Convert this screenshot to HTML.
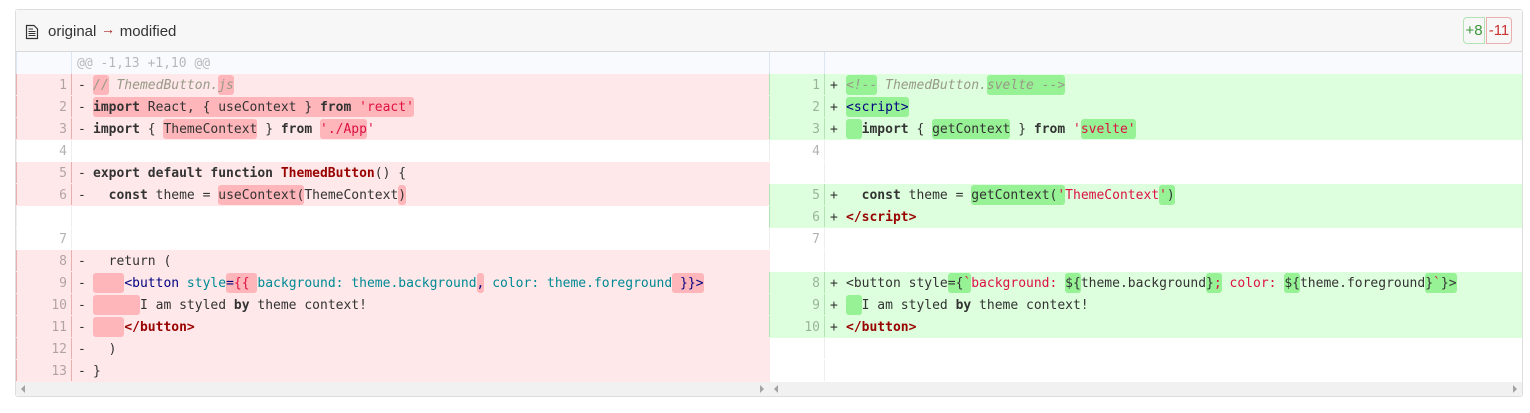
<!DOCTYPE html>
<html><head><meta charset="utf-8"><style>
html,body{margin:0;padding:0;background:#fff;width:1530px;height:413px;overflow:hidden}
#c{position:absolute;left:15px;top:9px;width:1506px;height:386px;border:1px solid #ddd;border-radius:3px;background:#fff}
#h{position:absolute;left:0;top:0;width:1506px;height:41px;background:#f7f7f7;border-bottom:1px solid #d8d8d8;font:15px/41px "Liberation Sans",sans-serif;color:#333}
#h .t{position:absolute;left:32px;top:1px;white-space:pre}
#h .t b{font-weight:normal;color:#a22;display:inline-block;width:15px;text-align:center;font-size:14px;position:relative;top:-2px}
#h svg{position:absolute;left:9px;top:14px}
.bd{position:absolute;top:7px;height:25px;line-height:25px;box-sizing:content-box;text-align:center;font-size:15px}
.ba{left:1447px;width:20px;border:1px solid #b4e2b4;border-radius:4px 0 0 4px;color:#399839}
.bb{left:1470px;width:24px;border:1px solid #e9aeae;border-radius:0 4px 4px 0;color:#c33}
.r{position:absolute;height:22px;font:13px/24px "DejaVu Sans Mono",monospace;white-space:pre;color:#333}
.L{left:0;width:754px}.R{left:753px;width:753px}
.del{background:#fee8e9}.add{background:#dfd}.hk{background:#f8fafd}
.b1,.b2{position:absolute;top:0;width:1px;height:21px}
.b1{left:0}.L .b2{left:55px}.R .b2{left:55px}
.del .b1,.del .b2{background:#e9aeae}
.add .b1,.add .b2{background:#b4e2b4}
.e .b1,.e .b2{background:#eee}
.hk .b1,.hk .b2{background:#dbe6f1;height:22px}
.n{position:absolute;right:auto;left:0;width:51px;text-align:right;color:rgba(0,0,0,.3)}
.m{position:absolute;left:62px}
.s{position:absolute;left:77px}
.R .m{left:61px}.R .s{left:77px}
.hk .x{position:absolute;left:61px;color:rgba(0,0,0,.27)}
i{font-style:normal}
.k{font-weight:bold}.st{color:#d14}.cm{color:#998;font-style:italic}.tg{color:#000080}.at{color:#008a94}.ti{color:#900;font-weight:bold}
.dh,.ah{display:inline-block;line-height:18px;padding-top:2px;border-radius:3px}
.dh{background:#ffb6ba}.ah{background:#97f295}
#sb{position:absolute;left:0;top:372px;width:1506px;height:14px;background:#f1f1f1;border-radius:0 0 3px 3px}
#sb u{position:absolute;top:3px;width:0;height:0;border-style:solid;border-color:transparent}
.al{border-width:4px 4px 4px 0;border-right-color:#a3a3a3!important}
.ar{border-width:4px 0 4px 4px;border-left-color:#a3a3a3!important}
</style></head><body>
<div id="c">
<div id="h">
<svg width="14" height="16" viewBox="0 0 14 16"><path d="M1.5 1.5H9L12.5 5V14.5H1.5Z" fill="none" stroke="#333" stroke-width="1.2"/><path d="M3.5 5H8M3.5 7.5H10.5M3.5 9.5H10.5M3.5 11.5H10.5" stroke="#333" stroke-width="1.1"/></svg>
<div class="t">original <b>→</b> modified</div>
<div class="bd ba">+8</div><div class="bd bb">-11</div>
</div>

<div class="r L hk" style="top:42px"><span class="b1"></span><span class="b2"></span><span class="x">@@ -1,13 +1,10 @@</span></div>
<div class="r R hk" style="top:42px"><span class="b1"></span><span class="b2"></span></div>

<div class="r L del" style="top:64px"><span class="b1"></span><span class="b2"></span><span class="n">1</span><span class="m">-</span><span class="s"><i class="dh cm">//</i><i class="cm"> ThemedButton.</i><i class="dh cm">js</i></span></div>
<div class="r L del" style="top:86px"><span class="b1"></span><span class="b2"></span><span class="n">2</span><span class="m">-</span><span class="s"><i class="dh"><i class="k">import</i> React, { useContext } <i class="k">from</i> <i class="st">'react'</i></i></span></div>
<div class="r L del" style="top:108px"><span class="b1"></span><span class="b2"></span><span class="n">3</span><span class="m">-</span><span class="s"><i class="k">import</i> { <i class="dh">ThemeContext</i> } <i class="k">from</i> <i class="dh st">'./App</i><i class="st">'</i></span></div>
<div class="r L e" style="top:130px"><span class="b1"></span><span class="b2"></span><span class="n">4</span></div>
<div class="r L del" style="top:152px"><span class="b1"></span><span class="b2"></span><span class="n">5</span><span class="m">-</span><span class="s"><i class="k">export default function</i> <i class="ti">ThemedButton</i>() {</span></div>
<div class="r L del" style="top:174px"><span class="b1"></span><span class="b2"></span><span class="n">6</span><span class="m">-</span><span class="s">  <i class="k">const</i> theme = <i class="dh">useContext(</i>ThemeContext<i class="dh">)</i></span></div>
<div class="r L e" style="top:196px"><span class="b1"></span><span class="b2"></span></div>
<div class="r L e" style="top:218px"><span class="b1"></span><span class="b2"></span><span class="n">7</span></div>
<div class="r L del" style="top:240px"><span class="b1"></span><span class="b2"></span><span class="n">8</span><span class="m">-</span><span class="s">  return (</span></div>
<div class="r L del" style="top:262px"><span class="b1"></span><span class="b2"></span><span class="n">9</span><span class="m">-</span><span class="s"><i class="dh">    </i><i class="tg">&lt;button</i><i class="at"> style</i><i class="dh"><i class="tg">=</i><i class="st">{{</i> </i><i class="at">background: theme.background</i><i class="dh tg">,</i><i class="at"> color: theme.foreground</i><i class="dh tg"> }}&gt;</i></span></div>
<div class="r L del" style="top:284px"><span class="b1"></span><span class="b2"></span><span class="n">10</span><span class="m">-</span><span class="s"><i class="dh">      </i>I am styled <i class="k">by</i> theme context!</span></div>
<div class="r L del" style="top:306px"><span class="b1"></span><span class="b2"></span><span class="n">11</span><span class="m">-</span><span class="s"><i class="dh">    </i><i class="ti">&lt;/button&gt;</i></span></div>
<div class="r L del" style="top:328px"><span class="b1"></span><span class="b2"></span><span class="n">12</span><span class="m">-</span><span class="s">  )</span></div>
<div class="r L del" style="top:350px"><span class="b1"></span><span class="b2"></span><span class="n">13</span><span class="m">-</span><span class="s">}</span></div>

<div class="r R add" style="top:64px"><span class="b1"></span><span class="b2"></span><span class="n">1</span><span class="m">+</span><span class="s"><i class="ah cm">&lt;!--</i><i class="cm"> ThemedButton.</i><i class="ah cm">svelte --&gt;</i></span></div>
<div class="r R add" style="top:86px"><span class="b1"></span><span class="b2"></span><span class="n">2</span><span class="m">+</span><span class="s"><i class="ah tg">&lt;script&gt;</i></span></div>
<div class="r R add" style="top:108px"><span class="b1"></span><span class="b2"></span><span class="n">3</span><span class="m">+</span><span class="s"><i class="ah">  </i><i class="k">import</i> { <i class="ah">getContext</i> } <i class="k">from</i> <i class="st">'</i><i class="ah st">svelte'</i></span></div>
<div class="r R e" style="top:130px"><span class="b1"></span><span class="b2"></span><span class="n">4</span></div>
<div class="r R" style="top:152px"><span class="b2" style="background:#eee"></span></div>
<div class="r R add" style="top:174px"><span class="b1"></span><span class="b2"></span><span class="n">5</span><span class="m">+</span><span class="s">  <i class="k">const</i> theme = <i class="ah">getContext(<i class="st">'</i></i><i class="st">ThemeContext</i><i class="ah"><i class="st">'</i>)</i></span></div>
<div class="r R add" style="top:196px"><span class="b1"></span><span class="b2"></span><span class="n">6</span><span class="m">+</span><span class="s"><i class="ti">&lt;/script&gt;</i></span></div>
<div class="r R e" style="top:218px"><span class="b1"></span><span class="b2"></span><span class="n">7</span></div>
<div class="r R" style="top:240px"><span class="b2" style="background:#eee"></span></div>
<div class="r R add" style="top:262px"><span class="b1"></span><span class="b2"></span><span class="n">8</span><span class="m">+</span><span class="s">&lt;button style<i class="ah">={<i class="st">`</i></i><i class="st">background: </i><i class="ah">${</i>theme.background<i class="ah">}<i class="st">;</i></i><i class="st"> color: </i><i class="ah">${</i>theme.foreground<i class="ah">}<i class="st">`</i>}&gt;</i></span></div>
<div class="r R add" style="top:284px"><span class="b1"></span><span class="b2"></span><span class="n">9</span><span class="m">+</span><span class="s"><i class="ah">  </i>I am styled <i class="k">by</i> theme context!</span></div>
<div class="r R add" style="top:306px"><span class="b1"></span><span class="b2"></span><span class="n">10</span><span class="m">+</span><span class="s"><i class="ti">&lt;/button&gt;</i></span></div>
<div class="r R" style="top:328px"><span class="b2" style="background:#eee"></span></div>
<div class="r R" style="top:350px"><span class="b2" style="background:#eee"></span></div>

<div id="sb">
<u class="al" style="left:5px"></u>
<u class="ar" style="left:744px"></u>
<u class="al" style="left:758px"></u>
<u class="ar" style="left:1497px"></u>
</div>
</div>
</body></html>
